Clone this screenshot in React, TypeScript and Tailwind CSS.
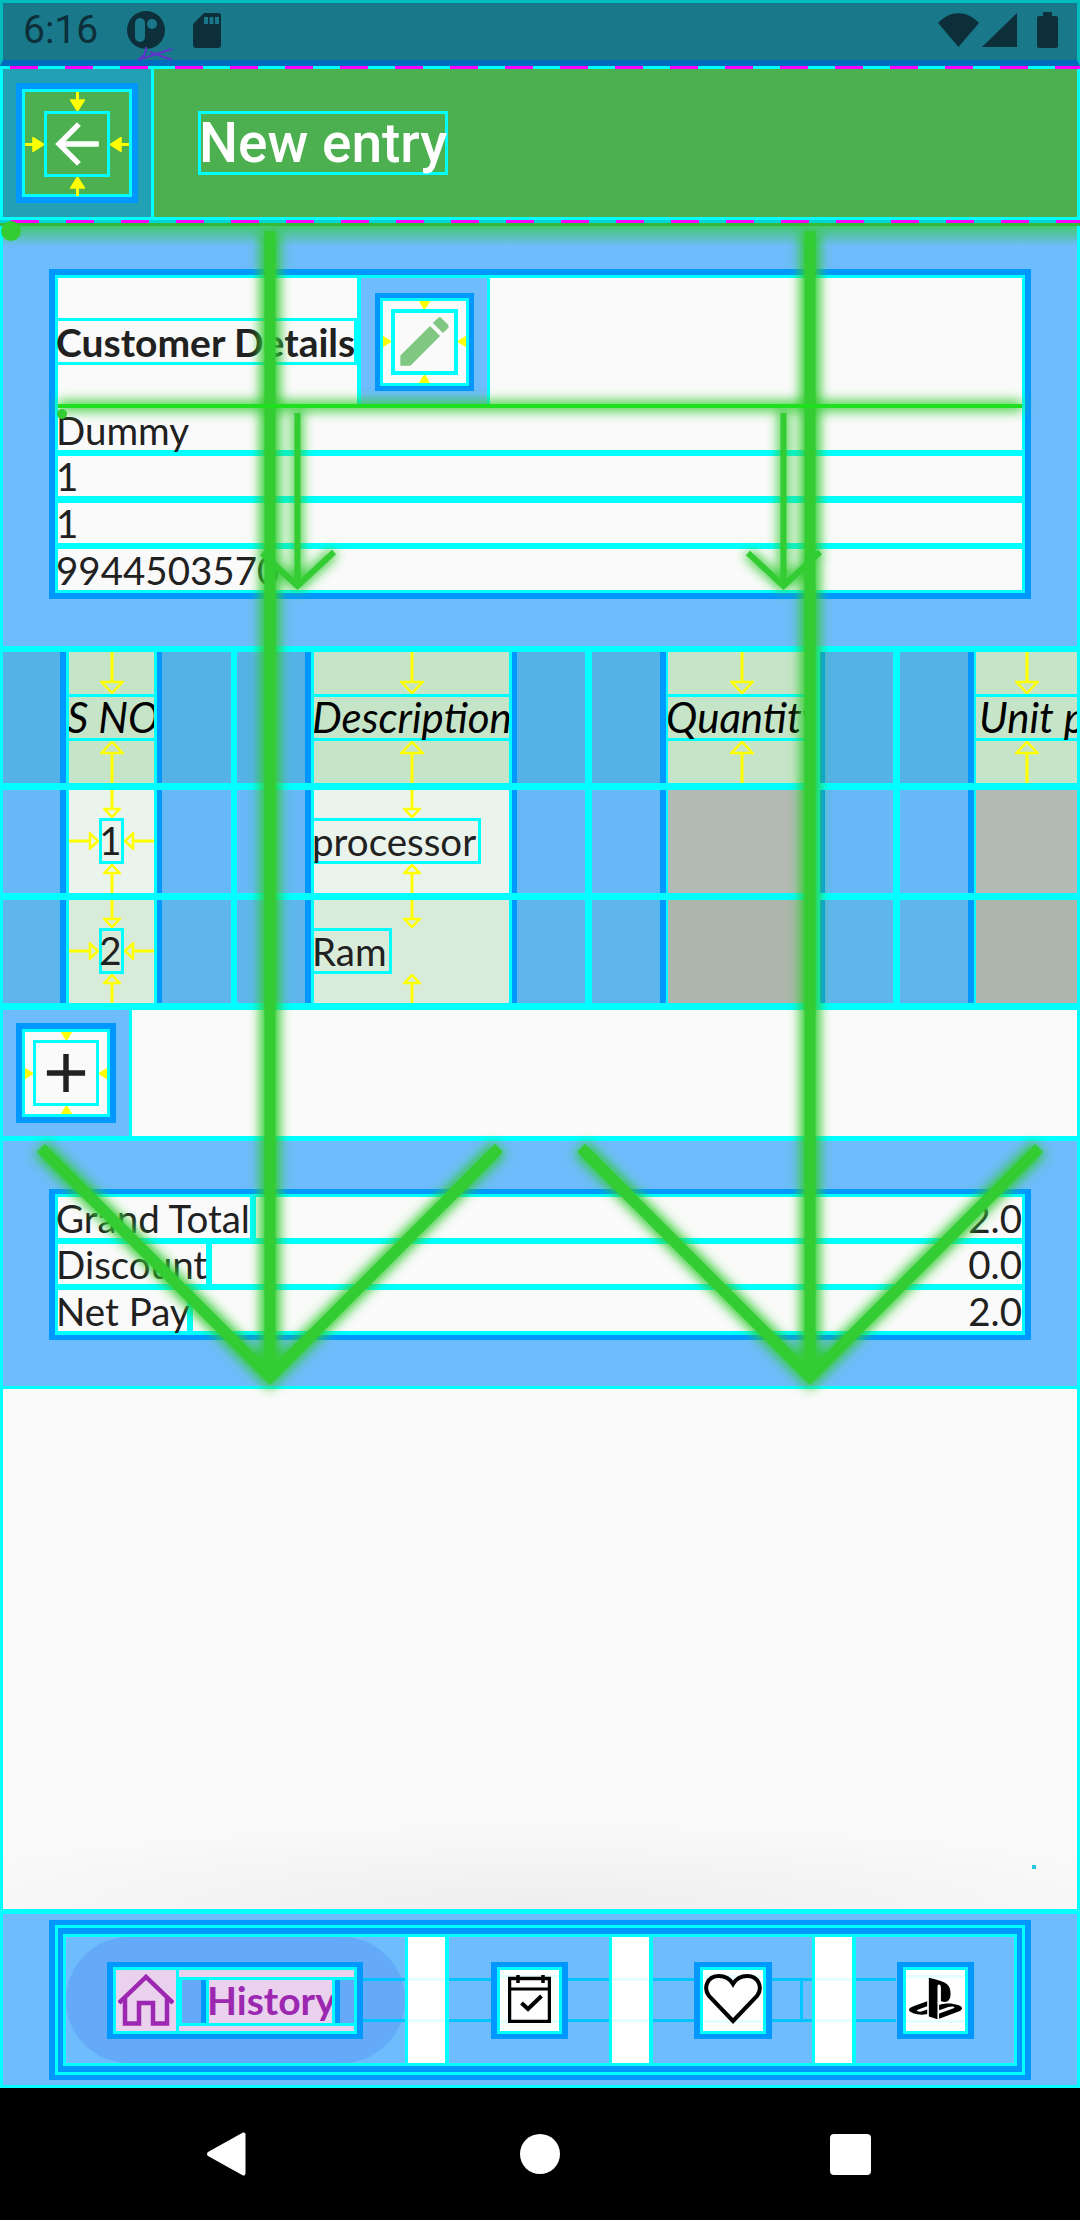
import React from "react";
import { SiPlaystation } from "react-icons/si";

const Y = "#ffff00";

// little yellow dimension arrow from the layout-bounds overlay
const Arrow = ({ dir, len, head = 18, tip = 9, solid = false }: { dir: "down" | "up" | "left" | "right"; len: number; head?: number; tip?: number; solid?: boolean }) => {
  const vertical = dir === "down" || dir === "up";
  const transforms = {
    down: undefined,
    up: `rotate(180 ${head / 2} ${len / 2})`,
    right: "matrix(0 1 1 0 0 0)",
    left: `matrix(0 1 -1 0 ${len} 0)`,
  };
  return (
    <svg width={vertical ? head : len} height={vertical ? len : head} className="shrink-0 block">
      <g transform={transforms[dir]}>
        <line x1={head / 2} x2={head / 2} y1={0} y2={len - tip} stroke={Y} strokeWidth={3} />
        <polygon points={`1.5,${len - tip} ${head - 1.5},${len - tip} ${head / 2},${len - 1}`} fill={solid ? Y : "none"} stroke={Y} strokeWidth={2.5} />
      </g>
    </svg>
  );
};

const IconButton = ({ outer, box, bg, gap, head, children }: { outer: string; box: string; bg: string; gap: number; head: number; children: React.ReactNode }) => (
  <div className={`${outer} ${bg} border-[#0097ff] shrink-0`}>
    <div className="w-full h-full border-[3px] border-[#00ffff] grid grid-cols-[1fr_auto_1fr] grid-rows-[1fr_auto_1fr] items-center justify-items-center">
      <span />
      <Arrow dir="down" len={gap} head={head} tip={head * 0.7} solid />
      <span />
      <Arrow dir="right" len={gap} head={head} tip={head * 0.7} solid />
      <div className={`${box} border-[#00ffff] flex items-center justify-center`}>{children}</div>
      <Arrow dir="left" len={gap} head={head} tip={head * 0.7} solid />
      <span />
      <Arrow dir="up" len={gap} head={head} tip={head * 0.7} solid />
      <span />
    </div>
  </div>
);

const StatusBar = () => (
  <div className="h-[66px] shrink-0 bg-[#19788a] border-x-[3px] border-t-[3px] border-x-[#00bcbc] border-t-[#00bcbc] border-b-[6px] border-b-[#006bbd] flex items-center relative">
    <span className="ml-[22px] w-[74px] -mt-[3px] font-[Roboto,sans-serif] text-[39px] leading-[44px] text-[#0d2f3a]">6:16</span>
    <svg width="38" height="38" viewBox="0 0 38 38" className="ml-[28px] -mt-[3px]">
      <circle cx="19" cy="19" r="19" fill="#0d2f3a" />
      <rect x="8" y="7" width="10" height="24" rx="5" fill="#19788a" />
      <circle cx="25" cy="13" r="5" fill="#19788a" />
    </svg>
    <svg width="28" height="35" viewBox="0 0 28 35" className="ml-[28px] -mt-[3px]">
      <path d="M11 0H25a3 3 0 0 1 3 3V32a3 3 0 0 1-3 3H3a3 3 0 0 1-3-3V11z" fill="#0d2f3a" />
      <rect x="11" y="4" width="4" height="7" fill="#19788a" />
      <rect x="16.500" y="4" width="4" height="7" fill="#19788a" />
      <rect x="22" y="4" width="4" height="7" fill="#19788a" />
    </svg>
    <div className="ml-auto mr-[19px] -mt-[3px] flex items-center">
      <svg width="41" height="34" viewBox="0 0 41 34">
        <path d="M0 10C12-3 29-3 41 10L20.500 34z" fill="#0d2f3a" />
      </svg>
      <svg width="35" height="34" viewBox="0 0 35 34" className="ml-[3px]">
        <path d="M0 34L35 0V34z" fill="#0d2f3a" />
      </svg>
      <svg width="21" height="36" viewBox="0 0 21 36" className="ml-[20px]">
        <path d="M6 4V1a1 1 0 0 1 1-1h7a1 1 0 0 1 1 1v3h4a2 2 0 0 1 2 2V34a2 2 0 0 1-2 2H2a2 2 0 0 1-2-2V6a2 2 0 0 1 2-2z" fill="#0d2f3a" />
      </svg>
    </div>
  </div>
);

const Toolbar = () => (
  <div className="shrink-0 flex flex-col">
    <div className="h-[3px] bg-[repeating-linear-gradient(90deg,#00ffff_0,#00ffff_10px,#ff00ff_10px,#ff00ff_38px,#00ffff_38px,#00ffff_55px)]" />
    <div className="h-[148px] flex bg-[#4caf50] border-x-[3px] border-[#00ffff]">
      <div className="w-[151px] bg-[#22a0b4] border-r-[3px] border-[#00ffff] flex items-center justify-center">
        <IconButton outer="w-[122px] h-[120px] border-[6px]" box="w-[66px] h-[66px] border-[3px]" bg="bg-[#4caf50]" gap={19} head={15}>
          <svg width="60" height="60" viewBox="1 1 22 22" fill="#ffffff">
            <path d="M20 11H7.830l5.590-5.590L12 4l-8 8 8 8 1.410-1.410L7.830 13H20v-2z" />
          </svg>
        </IconButton>
      </div>
      <div className="ml-[44px] my-auto w-[250px] h-[64px] border-[3px] border-[#00ffff] font-[Roboto,sans-serif] font-medium text-[55px] leading-[58px] text-white whitespace-nowrap">
        New entry
      </div>
    </div>
    <div className="h-[3px] bg-[#00ffff]" />
    <div className="h-[3px] bg-[repeating-linear-gradient(90deg,#00d4d4_0,#00d4d4_11px,#ff00ff_11px,#ff00ff_39px,#00d4d4_39px,#00d4d4_55px)]" />
    <div className="h-[3px] bg-[#35b83c]" />
  </div>
);

const TextRow = ({ h, children }: { h: string; children: React.ReactNode }) => (
  <div className={`${h} bg-[#fafafa] flex items-end text-[#212121] leading-[40px]`}>
    <span>{children}</span>
  </div>
);

const CustomerCard = () => (
  <div className="h-[420px] shrink-0 bg-[#6ebcfb] border-x-[3px] border-[#00ffff] pt-[43px] relative">
    <div className="absolute top-0 inset-x-0 h-[20px] bg-gradient-to-b from-[#33cc33]/70 to-transparent" />
    <div className="ml-[46px] w-[982px] h-[330px] border-[6px] border-[#0097ff]">
      <div className="h-full border-[3px] border-[#00ffff] bg-[#00ffff] flex flex-col">
        <div className="h-[127px] shrink-0 flex bg-[#fafafa]">
          <div className="w-[303px] border-r-[4px] border-[#00ffff] flex items-center">
            <div className="w-full h-[47px] border-y-[3px] border-r-[3px] border-[#00ffff] flex items-end leading-[40px] text-[39px] font-bold text-[#212121] whitespace-nowrap">
              Customer Details
            </div>
          </div>
          <div className="w-[129px] bg-[#6ebcfb] border-r-[3px] border-[#00ffff] flex items-center justify-center">
            <IconButton outer="w-[99px] h-[98px] border-[5px]" box="w-[67px] h-[66px] border-[4px]" bg="bg-[#fafafa]" gap={8} head={11}>
              <svg width="59" height="59" viewBox="1 1 22 22" fill="#81c784">
                <path d="M3 17.250V21h3.750L17.810 9.940l-3.750-3.750L3 17.250zM20.710 7.040c.39-.39.39-1.020 0-1.410l-2.340-2.340c-.39-.39-1.020-.39-1.410 0l-1.830 1.830 3.750 3.750 1.830-1.830z" />
              </svg>
            </IconButton>
          </div>
        </div>
        <TextRow h="h-[46px]">Dummy</TextRow>
        <div className="h-[6px] shrink-0" />
        <TextRow h="h-[40px]">1</TextRow>
        <div className="h-[7px] shrink-0" />
        <TextRow h="h-[40px]">1</TextRow>
        <div className="h-[6px] shrink-0" />
        <TextRow h="h-[41px]">9944503570</TextRow>
      </div>
    </div>
  </div>
);

type Tone = { blue: string; cell: string; gray: string; h: string };

const columns = [
  { left: "w-[57px]", cell: "w-[85px]", right: "w-[69px]", sep: "w-[6px]", cyanL: "w-[3px]", cyanR: "w-[3px]" },
  { left: "w-[68px]", cell: "w-[195px]", right: "w-[68px]", sep: "w-[7px]", cyanL: "w-[3px]", cyanR: "w-[3px]" },
  { left: "w-[68px]", cell: "w-[147px]", right: "w-[68px]", sep: "w-[7px]", cyanL: "w-[2px]", cyanR: "w-[5px]" },
  { left: "w-[68px]", cell: "w-[101px]", right: "", sep: "", cyanL: "w-[2px]", cyanR: "" },
];

const Row = ({ tone, cells }: { tone: Tone; cells: React.ReactNode[] }) => (
  <div className={`${tone.h} shrink-0 flex ${tone.blue}`}>
    {columns.map((c, i) => (
      <React.Fragment key={i}>
        <div className={`${c.left} shrink-0`} />
        <div className="w-[6px] shrink-0 bg-[#0097ff]" />
        <div className={`${c.cyanL} shrink-0 bg-[#00ffff]`} />
        <div className={`${c.cell} shrink-0 ${cells[i] ? tone.cell : tone.gray} overflow-hidden`}>{cells[i]}</div>
        {c.cyanR && <div className={`${c.cyanR} shrink-0 bg-[#00ffff]`} />}
        {c.right && <div className="w-[5px] shrink-0 bg-[#0097ff]" />}
        {c.right && <div className={`${c.right} shrink-0`} />}
        {c.sep && <div className={`${c.sep} shrink-0 bg-[#00ffff]`} />}
      </React.Fragment>
    ))}
  </div>
);

const HeaderCell = ({ label, pad = "" }: { label: string; pad?: string }) => (
  <div className="h-full flex flex-col items-center">
    <Arrow dir="down" len={42} head={24} tip={12} />
    <div className={`w-full h-[47px] shrink-0 border-y-[3px] border-[#00ffff] italic text-[42px] text-black leading-[40px] whitespace-nowrap ${pad}`}>{label}</div>
    <Arrow dir="up" len={42} head={24} tip={12} />
  </div>
);

const NumberCell = ({ value }: { value: string }) => (
  <div className="h-full flex flex-col items-center">
    <Arrow dir="down" len={28} />
    <div className="w-full h-[46px] shrink-0 flex items-center">
      <div className="flex-1 flex justify-center"><Arrow dir="right" len={30} /></div>
      <div className="w-[25px] h-[46px] border-[3px] border-[#00ffff] text-[#212121] leading-[38px] flex justify-center">{value}</div>
      <div className="flex-1 flex justify-center"><Arrow dir="left" len={30} /></div>
    </div>
    <Arrow dir="up" len={29} />
  </div>
);

const DescCell = ({ value }: { value: string }) => (
  <div className="h-full flex flex-col items-center">
    <Arrow dir="down" len={28} />
    <div className="self-start h-[46px] shrink-0 border-y-[3px] border-r-[3px] border-[#00ffff] text-[#212121] leading-[40px] pr-[2px] whitespace-nowrap">{value}</div>
    <Arrow dir="up" len={29} />
  </div>
);

const ItemsTable = () => (
  <div className="shrink-0 border-x-[3px] border-[#00ffff] border-t-[6px] border-b-[7px] bg-[#00ffff] flex flex-col">
    <Row
      tone={{ blue: "bg-[#54b2e6]", cell: "bg-[#c6e4c8]", gray: "bg-[#c6e4c8]", h: "h-[131px]" }}
      cells={[<HeaderCell label="S NO" />, <HeaderCell label="Description" />, <HeaderCell label="Quantity" />, <HeaderCell label="Unit price" pad="pl-[5px]" />]}
    />
    <div className="h-[7px] shrink-0" />
    <Row
      tone={{ blue: "bg-[#66b9f6]", cell: "bg-[#ebf4ec]", gray: "bg-[#b4bab4]", h: "h-[103px]" }}
      cells={[<NumberCell value="1" />, <DescCell value="processor" />, null, null]}
    />
    <div className="h-[7px] shrink-0" />
    <Row
      tone={{ blue: "bg-[#5fb6ed]", cell: "bg-[#d9ebd9]", gray: "bg-[#aeb6ac]", h: "h-[103px]" }}
      cells={[<NumberCell value="2" />, <DescCell value="Ram" />, null, null]}
    />
  </div>
);

const AddRow = () => (
  <div className="h-[131px] shrink-0 border-x-[3px] border-[#00ffff] border-b-[5px] flex bg-[#fafafa]">
    <div className="w-[129px] bg-[#6ebcfb] border-r-[3px] border-[#00ffff] flex items-center pl-[13px]">
      <IconButton outer="w-[100px] h-[100px] border-[6px]" box="w-[66px] h-[66px] border-[3px]" bg="bg-[#fafafa]" gap={8} head={11}>
        <svg width="60" height="60" viewBox="1 1 22 22" fill="#212121">
          <path d="M19 13h-6v6h-2v-6H5v-2h6V5h2v6h6v2z" />
        </svg>
      </IconButton>
    </div>
  </div>
);

const TotalRow = ({ h, w, label, value }: { h: string; w: string; label: string; value: string }) => (
  <div className={`${h} shrink-0 flex gap-[6px]`}>
    <div className={`${w} bg-[#fafafa] flex items-end leading-[40px] text-[#212121] whitespace-nowrap`}>{label}</div>
    <div className="flex-1 bg-[#fafafa] flex items-end justify-end leading-[40px] text-[#212121]">{value}</div>
  </div>
);

const Totals = () => (
  <div className="h-[248px] shrink-0 bg-[#6ebcfb] border-x-[3px] border-[#00ffff] border-b-[3px] pt-[48px]">
    <div className="ml-[46px] w-[982px] h-[151px] border-x-[6px] border-y-[5px] border-[#0097ff]">
      <div className="h-full border-[3px] border-[#00ffff] bg-[#00ffff] flex flex-col gap-[6px]">
        <TotalRow h="h-[41px]" w="w-[192px]" label="Grand Total" value="2.0" />
        <TotalRow h="h-[40px]" w="w-[148px]" label="Discount" value="0.0" />
        <TotalRow h="h-[41px]" w="w-[129px]" label="Net Pay" value="2.0" />
      </div>
    </div>
  </div>
);

const EmptyArea = () => (
  <div className="h-[520px] shrink-0 border-x-[3px] border-[#00ffff] bg-[radial-gradient(ellipse_65%_90px_at_50%_100%,#eeeeee,#fafafa)] flex items-end justify-end">
    <div className="w-[4px] h-[4px] mb-[40px] mr-[41px] bg-[#26c6da]" />
  </div>
);

const NavSlot = ({ w, children }: { w: string; children: React.ReactNode }) => (
  <div className={`${w} shrink-0 relative z-10 flex items-center justify-center`}>{children}</div>
);

const NavIcon = ({ w, children }: { w: string; children: React.ReactNode }) => (
  <div className={`${w} h-[77px] border-x-[6px] border-y-[5px] border-[#0097ff] bg-white`}>
    <div className="w-full h-full border-[3px] border-[#00ffff] flex items-center">
      <div className="w-full h-[48px] mb-[3px] border-y-[3px] border-[#e4ffff] flex items-center justify-center">{children}</div>
    </div>
  </div>
);

const WhiteGap = () => (
  <div className="relative z-10 w-[44px] shrink-0 flex">
    <div className="w-[3px] bg-[#00ffff]" />
    <div className="flex-1 bg-white flex items-center">
      <div className="w-full h-[44px] border-y-[3px] border-[#e4ffff]" />
    </div>
    <div className="w-[4px] bg-[#00ffff]" />
  </div>
);

const BottomNav = () => (
  <div className="h-[179px] shrink-0 bg-[#6ebcfb] border-x-[3px] border-[#00ffff] border-t-[5px] border-b-[3px] pt-[6px]">
    <div className="ml-[46px] w-[982px] h-[160px] border-x-[6px] border-y-[5px] border-[#0097ff]">
      <div className="h-full border-[3px] border-[#00ffff]">
        <div className="h-full border-x-[5px] border-y-[6px] border-[#0097ff]">
          <div className="h-full border-[3px] border-[#00ffff] flex relative">
            <div className="absolute left-[292px] w-[538px] top-[41px] h-[44px] border-y-[3px] border-[#00c4ff]" />
            <div className="absolute left-[734px] top-[41px] h-[44px] w-[3px] bg-[#00c4ff]" />
            <div className="w-[339px] shrink-0 bg-[#64aaf8] rounded-[63px] flex items-center pl-[41px]">
              <div className="relative z-10 w-[256px] h-[77px] border-x-[6px] border-y-[5px] border-[#0097ff]">
                <div className="w-full h-full border-[3px] border-[#00ffff] flex bg-[#ead2ee]">
                  <div className="w-[63px] shrink-0 border-r-[3px] border-[#00ffff] flex items-center justify-center">
                    <svg width="56" height="52" viewBox="0 0 56 52" fill="none" stroke="#9c27b0" strokeWidth="4.500">
                      <path d="M1 29L28 3L55 29M7 24V49.500H21V29H35V49.500H49V24" />
                    </svg>
                  </div>
                  <div className="flex-1 pt-[7px] pb-[5px]">
                    <div className="h-full border-y-[3px] border-l-[3px] border-[#00ffff] flex bg-[#64aaf8] text-[#9c27b0] text-[39px] font-bold leading-[40px]">
                      <div className="w-[19px] shrink-0" />
                      <div className="w-[5px] shrink-0 bg-[#0097ff]" />
                      <div className="w-[3px] shrink-0 bg-[#00ffff]" />
                      <div className="w-[123px] shrink-0 bg-[#ead2ee] whitespace-nowrap">History</div>
                      <div className="w-[3px] shrink-0 bg-[#00ffff]" />
                      <div className="w-[5px] shrink-0 bg-[#0097ff]" />
                    </div>
                  </div>
                </div>
              </div>
            </div>
            <WhiteGap />
            <NavSlot w="w-[160px]">
              <NavIcon w="w-[77px]">
                <svg width="43" height="48" viewBox="0 0 43 48" fill="none" stroke="#000000" className="shrink-0">
                  <rect x="1.500" y="3.500" width="40" height="43" strokeWidth="3.500" />
                  <path d="M1 14H42" strokeWidth="3" />
                  <path d="M10 0V8M35 0V8" strokeWidth="3.500" />
                  <path d="M13.500 28L20 34L33.500 21" strokeWidth="4" />
                </svg>
              </NavIcon>
            </NavSlot>
            <WhiteGap />
            <NavSlot w="w-[159px]">
              <NavIcon w="w-[78px]">
                <svg width="58" height="50" viewBox="0 0 58 50" fill="none" stroke="#000000" strokeWidth="4" className="shrink-0">
                  <path d="M29 47L5 22C-1 14 3 2 15 2C21 2 26 5 29 10C32 5 37 2 43 2C55 2 59 14 53 22Z" />
                </svg>
              </NavIcon>
            </NavSlot>
            <WhiteGap />
            <NavSlot w="w-[158px]">
              <NavIcon w="w-[77px]">
                <SiPlaystation size={53} color="#000000" className="shrink-0" />
              </NavIcon>
            </NavSlot>
          </div>
        </div>
      </div>
    </div>
  </div>
);

const SystemNav = () => (
  <div className="flex-1 bg-black flex items-center">
    <svg width="40" height="46" viewBox="0 0 40 46" className="ml-[206px]">
      <path d="M37 1.500a2 2 0 0 1 2.500 2V42.500a2 2 0 0 1-2.500 2L2 25a2.500 2.500 0 0 1 0-4z" fill="#ffffff" />
    </svg>
    <div className="ml-[274px] w-[40px] h-[40px] rounded-full bg-white" />
    <div className="ml-[270px] w-[41px] h-[41px] rounded-[4px] bg-white" />
  </div>
);

// green layout arrows that sit on top of the whole screen
const GreenOverlay = () => (
  <svg width="1080" height="2220" className="absolute inset-0 pointer-events-none">
    <defs>
      <filter id="glow" filterUnits="userSpaceOnUse" x="0" y="0" width="1080" height="2220">
        <feGaussianBlur stdDeviation="6" />
      </filter>
    </defs>
    <g fill="none" stroke="#33cc33" filter="url(#glow)">
      <path d="M270 231V1375M810 231V1375" strokeWidth="20" />
      <path d="M41 1148L270 1377L499 1148M581 1148L810 1377L1039 1148" strokeWidth="18" />
      <path d="M297.500 413V586M783.500 413V586M262 553L297.500 586L334 552M748 553L783.500 586L820 552" strokeWidth="10" />
      <path d="M58 406H1022" strokeWidth="10" />
    </g>
    <g fill="none" stroke="#33cc33">
      <path d="M270 231V1375M810 231V1375" strokeWidth="11" />
      <path d="M41 1148L270 1377L499 1148M581 1148L810 1377L1039 1148" strokeWidth="11" />
      <path d="M297.500 413V586M783.500 413V586M262 553L297.500 586L334 552M748 553L783.500 586L820 552" strokeWidth="6" />
      <path d="M58 406H1022" stroke="#1ee01e" strokeWidth="4" />
    </g>
    <circle cx="11" cy="231" r="10" fill="#33cc33" />
    <circle cx="62" cy="414" r="5" fill="#33cc33" />
    <path d="M138 60L172 49M150 52L172 60M146 47C146 52 146 55 138 60" stroke="#5e35c8" strokeWidth="2" fill="none" />
  </svg>
);

const App = () => {
  return (
    <div className="w-[1080px] h-[2220px] flex flex-col relative overflow-hidden font-[Lato,sans-serif] text-[38.500px] indent-[-2px]">
      <StatusBar />
      <Toolbar />
      <CustomerCard />
      <ItemsTable />
      <AddRow />
      <Totals />
      <EmptyArea />
      <BottomNav />
      <SystemNav />
      <GreenOverlay />
    </div>
  );
};

export default App;
